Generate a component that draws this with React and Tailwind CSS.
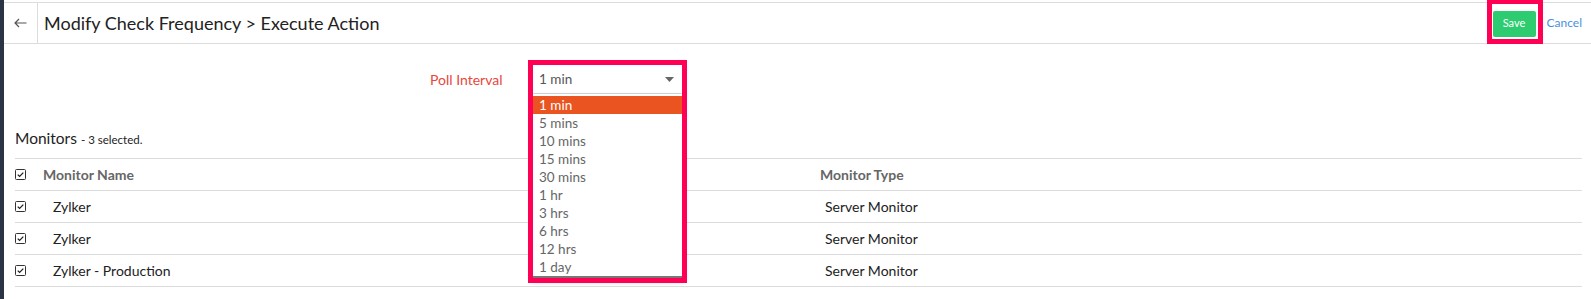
import React from 'react';

const intervals = ['1 min', '5 mins', '10 mins', '15 mins', '30 mins', '1 hr', '3 hrs', '6 hrs', '12 hrs', '1 day'];

const monitors = [
  { name: 'Zylker', type: 'Server Monitor' },
  { name: 'Zylker', type: 'Server Monitor' },
  { name: 'Zylker - Production', type: 'Server Monitor' },
];

function CheckBox() {
  return (
    <svg width="11" height="11" viewBox="0 0 11 11" className="shrink-0">
      <rect x="0.5" y="0.5" width="10" height="10" rx="1" fill="#fff" stroke="#333" strokeWidth="1" />
      <path d="M2.7 5.6 L4.6 7.4 L8.3 3.6" fill="none" stroke="#222" strokeWidth="1.3" />
    </svg>
  );
}

export default function App() {
  return (
    <div className="w-full h-[299px] flex bg-white overflow-hidden" style={{ fontFamily: 'Lato, "Open Sans", sans-serif' }}>
      <div className="w-[4px] shrink-0 bg-[#2b3444]" />
      <div className="flex-1 flex flex-col">
        {/* header */}
        <div className="mt-[2px] h-[42px] border-t border-b border-[#dcdcdc] flex items-center">
          <div className="w-[34px] h-full border-r border-[#dcdcdc] flex items-center justify-center">
            <svg width="13" height="10" viewBox="0 0 13 10">
              <path d="M12.5 5 H1 M5 1 L1 5 L5 9" fill="none" stroke="#555" strokeWidth="1.2" />
            </svg>
          </div>
          <div className="pl-[6px] text-[18px] text-[#222] flex-1">Modify Check Frequency &gt; Execute Action</div>
          <div className="relative mr-[11px]">
            <button className="h-[26px] w-[43px] rounded-[2px] bg-[#2ecc71] text-white text-[11px]">Save</button>
            <div className="absolute left-[-6px] top-[-10px] w-[56px] h-[45px] border-[5px] border-[#ff0055] pointer-events-none" />
          </div>
          <a className="text-[12px] text-[#4a90e2] mr-[9px]">Cancel</a>
        </div>

        <div className="pl-[11px] pr-[9px]">
          {/* poll interval */}
          <div className="mt-[21px] h-[28px] flex items-center">
            <div className="ml-[415px] w-[103px] text-[14px] text-[#e8473c]">Poll Interval</div>
            <div className="relative w-[149px] h-[28px] bg-white flex items-center justify-between pl-[6px] pr-[8px] text-[13.5px] text-[#555] shadow-[0_1px_2px_rgba(0,0,0,0.25)]">
              <span>1 min</span>
              <svg width="9" height="5" viewBox="0 0 9 5">
                <path d="M0 0 H9 L4.5 5 Z" fill="#666" />
              </svg>
              <div className="absolute left-0 top-[29px] w-[149px] bg-white pt-[2px] border-b-2 border-[#777] z-10 shadow-[0_3px_6px_rgba(0,0,0,0.2)]">
                {intervals.map((t, i) => (
                  <div key={t} className={'h-[18px] leading-[18px] pl-[6px] text-[13.5px] ' + (i === 0 ? 'bg-[#e95420] text-white' : 'text-[#666]')}>
                    {t}
                  </div>
                ))}
              </div>
              <div className="absolute left-[-5px] top-[-5px] w-[159px] h-[223px] border-[5px] border-[#ff0055] z-20 pointer-events-none" />
            </div>
          </div>

          {/* monitors */}
          <div className="mt-[34px] h-[20px] flex items-baseline text-[#222]">
            <span className="text-[15.5px]">Monitors</span>
            <span className="text-[11.5px] ml-[4px]">- 3 selected.</span>
          </div>

          <div className="mt-[11px] border-t border-[#dcdcdc]">
            <div className="h-[32px] border-b border-[#dcdcdc] flex items-center text-[14px] font-bold text-[#666]">
              <CheckBox />
              <div className="ml-[17px] w-[777px]">Monitor Name</div>
              <div>Monitor Type</div>
            </div>
            {monitors.map((m, i) => (
              <div key={i} className="h-[32px] border-b border-[#dcdcdc] flex items-center text-[14px] text-[#222]">
                <CheckBox />
                <div className="ml-[27px] w-[772px]">{m.name}</div>
                <div>{m.type}</div>
              </div>
            ))}
          </div>
        </div>
      </div>
    </div>
  );
}
